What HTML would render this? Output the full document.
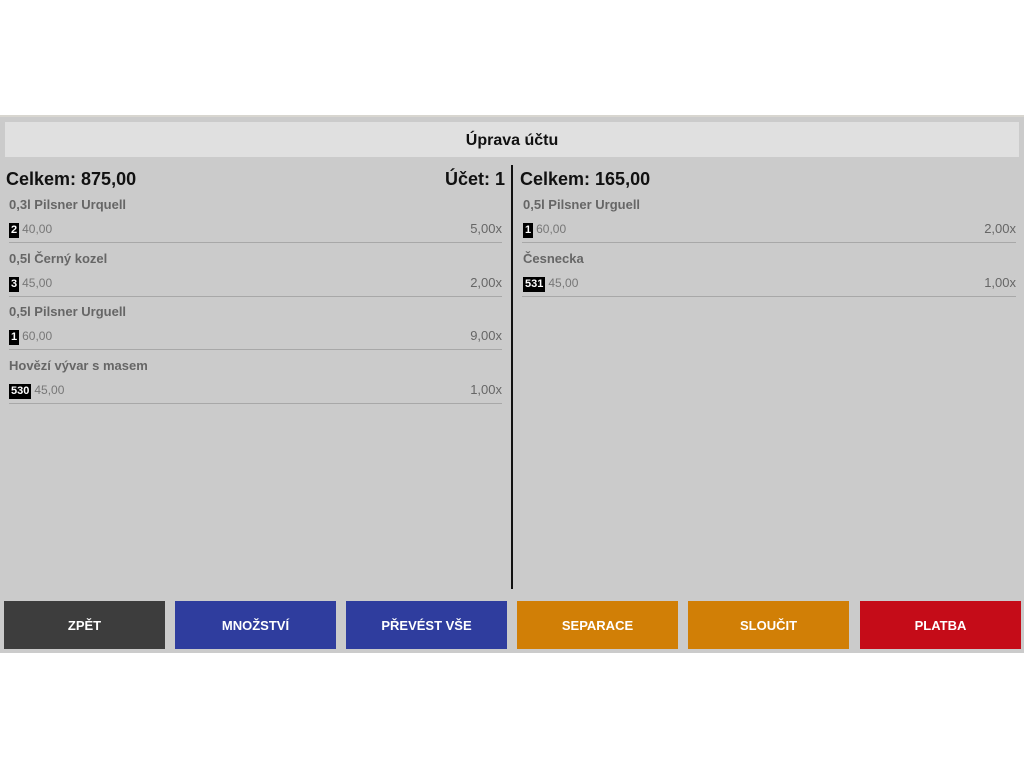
<!DOCTYPE html><html><head><meta charset="utf-8"><style>
body{margin:0;width:1024px;height:768px;background:#fff;position:relative;font-family:"Liberation Sans",Arial,sans-serif;overflow:hidden}
.a{position:absolute}
.main{left:0;top:115px;width:1024px;height:538px;background:#cbcbcb;border-top:2px solid #d8d6d0;box-sizing:border-box}
.hdr{left:5px;top:122px;width:1014px;height:35px;background:#e0e0e0;font-weight:bold;font-size:16px;line-height:37px;text-align:center;color:#111}
.tot{font-size:18px;font-weight:bold;color:#111;line-height:22px}
.nm{font-size:13px;font-weight:bold;color:#666;line-height:16px}
.sub{font-size:12px;color:#777;line-height:16px}
.b{display:inline-block;background:#000;color:#fff;font-weight:bold;font-size:11px;padding:0 2px;line-height:15px;margin-right:3px}
.q{font-size:13px;color:#666;line-height:16px;text-align:right}
.ln{height:1px;background:#a8a8a8}
.btn{top:601px;height:48px;width:161px;color:#fff;font-weight:bold;font-size:13px;line-height:49px;text-align:center}
</style></head><body>
<div class="a main"></div>
<div class="a hdr">Úprava účtu</div>
<div class="a tot" style="left:6px;top:168px">Celkem: 875,00</div>
<div class="a tot" style="left:445px;top:168px">Účet: 1</div>
<div class="a" style="left:511px;top:165px;width:2px;height:424px;background:#111"></div>
<div class="a tot" style="left:520px;top:168px">Celkem: 165,00</div>

<div class="a nm" style="left:9px;top:197px">0,3l Pilsner Urquell</div>
<div class="a sub" style="left:9px;top:221px"><span class="b">2</span>40,00</div>
<div class="a q" style="left:400px;width:102px;top:221px">5,00x</div>
<div class="a ln" style="left:9px;top:242px;width:493px"></div>

<div class="a nm" style="left:9px;top:251px">0,5l Černý kozel</div>
<div class="a sub" style="left:9px;top:275px"><span class="b">3</span>45,00</div>
<div class="a q" style="left:400px;width:102px;top:275px">2,00x</div>
<div class="a ln" style="left:9px;top:296px;width:493px"></div>

<div class="a nm" style="left:9px;top:304px">0,5l Pilsner Urguell</div>
<div class="a sub" style="left:9px;top:328px"><span class="b">1</span>60,00</div>
<div class="a q" style="left:400px;width:102px;top:328px">9,00x</div>
<div class="a ln" style="left:9px;top:349px;width:493px"></div>

<div class="a nm" style="left:9px;top:358px">Hovězí vývar s masem</div>
<div class="a sub" style="left:9px;top:382px"><span class="b">530</span>45,00</div>
<div class="a q" style="left:400px;width:102px;top:382px">1,00x</div>
<div class="a ln" style="left:9px;top:403px;width:493px"></div>

<div class="a nm" style="left:523px;top:197px">0,5l Pilsner Urguell</div>
<div class="a sub" style="left:523px;top:221px"><span class="b">1</span>60,00</div>
<div class="a q" style="left:900px;width:116px;top:221px">2,00x</div>
<div class="a ln" style="left:522px;top:242px;width:494px"></div>

<div class="a nm" style="left:523px;top:251px">Česnecka</div>
<div class="a sub" style="left:523px;top:275px"><span class="b">531</span>45,00</div>
<div class="a q" style="left:900px;width:116px;top:275px">1,00x</div>
<div class="a ln" style="left:522px;top:296px;width:494px"></div>

<div class="a btn" style="left:4px;background:#3d3d3d">ZPĚT</div>
<div class="a btn" style="left:175px;background:#2f3d9e">MNOŽSTVÍ</div>
<div class="a btn" style="left:346px;background:#2f3d9e">PŘEVÉST VŠE</div>
<div class="a btn" style="left:517px;background:#d17f06">SEPARACE</div>
<div class="a btn" style="left:688px;background:#d17f06">SLOUČIT</div>
<div class="a btn" style="left:860px;background:#c50c18">PLATBA</div>
</body></html>
